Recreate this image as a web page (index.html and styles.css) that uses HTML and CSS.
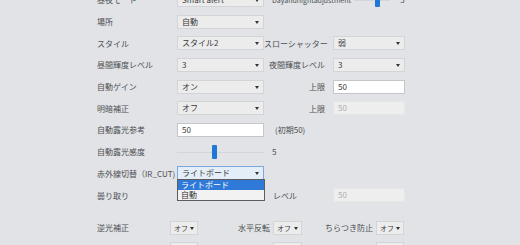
FILE: index.html
```html
<!DOCTYPE html>
<html lang="ja">
<head>
    <meta charset="UTF-8">
    <title>画像設定</title>
    <link rel="stylesheet" href="styles.css">
</head>
<body>
    <div class="panel">
        <div class="row">
            <span class="label">昼夜モード</span>
            <div class="select">Smart alert</div>
            <div class="wide">
                <span class="side-text">Dayandnightadjustment</span>
                <div class="slider short"><span class="thumb at-end"></span></div>
                <span class="value">3</span>
            </div>
        </div>
        <div class="row">
            <span class="label">場所</span>
            <div class="select">自動</div>
        </div>
        <div class="row">
            <span class="label">スタイル</span>
            <div class="select">スタイル2</div>
            <span class="right-label">スローシャッター</span>
            <div class="select">弱</div>
        </div>
        <div class="row">
            <span class="label">昼間輝度レベル</span>
            <div class="select">3</div>
            <span class="right-label">夜間輝度レベル</span>
            <div class="select">3</div>
        </div>
        <div class="row">
            <span class="label">自動ゲイン</span>
            <div class="select">オン</div>
            <span class="right-label">上限</span>
            <div class="input">50</div>
        </div>
        <div class="row">
            <span class="label">明暗補正</span>
            <div class="select">オフ</div>
            <span class="right-label">上限</span>
            <div class="input disabled">50</div>
        </div>
        <div class="row">
            <span class="label">自動露光参考</span>
            <div class="input">50</div>
            <span class="note">(初期50)</span>
        </div>
        <div class="row">
            <span class="label">自動露光感度</span>
            <div class="slider"><span class="thumb mid"></span></div>
            <span class="note value-note">5</span>
        </div>
        <div class="row">
            <span class="label">赤外線切替（IR_CUT)</span>
            <div class="select focused">
                ライトボード
                <!-- open dropdown list -->
                <ul class="options">
                    <li class="active">ライトボード</li>
                    <li>自動</li>
                </ul>
            </div>
        </div>
        <div class="row">
            <span class="label">曇り取り</span>
            <span></span>
            <span class="note level">レベル</span>
            <div class="input disabled">50</div>
        </div>

        <div class="row small-row first-small">
            <span class="label">逆光補正</span>
            <div class="select mini">オフ</div>
            <span class="mini-label">水平反転</span>
            <div class="select mini">オフ</div>
            <span class="mini-label">ちらつき防止</span>
            <div class="select mini">オフ</div>
        </div>
        <div class="row small-row">
            <span class="label">ノイズ低減</span>
            <div class="select mini">オフ</div>
            <span class="mini-label">垂直反転</span>
            <div class="select mini">オフ</div>
            <span class="mini-label">回転</span>
            <div class="select mini">オフ</div>
        </div>
    </div>
</body>
</html>
```

FILE: styles.css
```css
body {
    margin: 0;
    background: #e1e3e6;
    font-family: "Noto Sans CJK JP", "Noto Sans", sans-serif;
    font-size: 8px;
    color: #4d4f52;
    overflow: hidden;
    height: 245px;
}
.panel {
    padding-left: 97px;
    margin-top: -11px;
}
.row {
    display: grid;
    grid-template-columns: 80px 87px 69px 72px;
    align-items: center;
    height: 21.7px;
}
.label {
    white-space: nowrap;
}
.right-label {
    text-align: right;
    padding-right: 8px;
    white-space: nowrap;
}
.note {
    padding-left: 11px;
    white-space: nowrap;
}
.value-note {
    padding-left: 8px;
}
.note.level {
    padding-left: 9px;
}
.select, .input {
    position: relative;
    box-sizing: border-box;
    height: 14px;
    line-height: 12px;
    padding-left: 4px;
    border: 1px solid #d2d4d7;
    background: #ececec;
    color: #3a3a3a;
    white-space: nowrap;
}
.select::after {
    content: "";
    position: absolute;
    right: 4px;
    top: 5px;
    border-left: 2px solid transparent;
    border-right: 2px solid transparent;
    border-top: 3px solid #333;
}
.select.mini {
    padding-left: 3px;
    font-size: 7px;
}
.select.mini::after {
    right: 3px;
}
.input {
    background: #fff;
    border-color: #c4c6c9;
}
.input.disabled {
    background: #eeeeee;
    border-color: #e6e6e6;
    color: #b0b0b0;
}
.select.focused {
    border-color: #7aa7dc;
    background: #e4eef9;
}
.options {
    position: absolute;
    left: -1px;
    top: 12px;
    width: 86px;
    margin: 0;
    padding: 0;
    list-style: none;
    border: 1px solid #5c5c5c;
    background: #f2f2f2;
    z-index: 2;
}
.options li {
    height: 10px;
    line-height: 10px;
    padding-left: 3px;
    color: #333;
}
.options li.active {
    background: #2f7ad8;
    color: #fff;
}
.wide {
    grid-column: 3 / 5;
    display: flex;
    align-items: center;
    padding-left: 8px;
}
.side-text {
    white-space: nowrap;
    font-size: 7px;
}
.slider {
    position: relative;
    height: 14px;
}
.slider::before {
    content: "";
    position: absolute;
    left: 0;
    right: 0;
    top: 7px;
    height: 1px;
    background: #d3d5d8;
}
.slider.short {
    width: 36px;
    margin-left: 3px;
}
.thumb {
    position: absolute;
    top: 0;
    width: 5px;
    height: 14px;
    border-radius: 1px;
    background: #1f78d8;
}
.thumb.at-end {
    left: 21px;
}
.thumb.mid {
    left: 35px;
}
.value {
    margin-left: 10px;
}
.small-row {
    grid-template-columns: 73px 28px 75px 29px 74px 28px;
}
.first-small {
    margin-top: 11px;
}
.mini-label {
    text-align: right;
    padding-right: 3px;
    white-space: nowrap;
}
```
